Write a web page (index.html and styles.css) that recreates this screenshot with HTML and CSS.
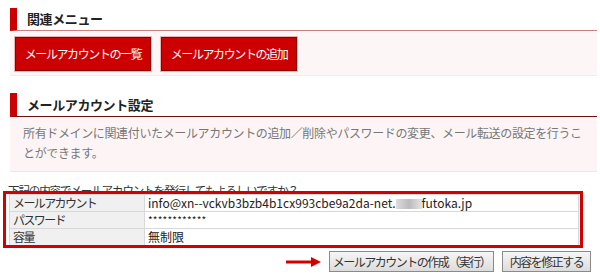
FILE: index.html
```html
<!DOCTYPE html>
<html lang="ja">
<head>
    <meta charset="UTF-8">
    <title>メールアカウント設定</title>
    <link rel="stylesheet" href="styles.css">
</head>
<body>
    <div class="page">
        <h2 class="sec-title sec-title-light">関連メニュー</h2>
        <div class="menu-panel">
            <a class="red-btn" href="#">メールアカウントの一覧</a>
            <a class="red-btn" href="#">メールアカウントの追加</a>
        </div>

        <h2 class="sec-title sec-title-dark">メールアカウント設定</h2>
        <div class="desc-panel">
            <p>所有ドメインに関連付いたメールアカウントの追加／削除やパスワードの変更、メール転送の設定を行うことができます。</p>
        </div>

        <div class="confirm">
            <p class="confirm-text">下記の内容でメールアカウントを発行してもよろしいですか？</p>
            <table class="confirm-table">
                <tr><th>メールアカウント</th><td>info@xn--vckvb3bzb4b1cx993cbe9a2da-net.<span class="blur"></span>futoka.jp</td></tr>
                <tr><th>パスワード</th><td class="pw">************</td></tr>
                <tr><th>容量</th><td>無制限</td></tr>
            </table>
            <div class="mark"></div>
        </div>

        <div class="actions">
            <svg class="arrow" width="36" height="12" viewBox="0 0 36 12">
                <line x1="0" y1="6" x2="27" y2="6" stroke="#d40000" stroke-width="3"/>
                <polygon points="25,1 35,6 25,11" fill="#d40000"/>
            </svg>
            <button class="gray-btn btn-run">メールアカウントの作成（実行）</button>
            <button class="gray-btn btn-fix">内容を修正する</button>
        </div>
    </div>
</body>
</html>
```

FILE: styles.css
```css
body { margin: 0; background: #fff; color: #333; font-family: "Noto Sans CJK JP", "Noto Sans", sans-serif; }
.page { padding: 8px 3px 0 0; }

.sec-title { margin: 0 0 0 10px; height: 22px; line-height: 22px; padding-left: 10px; border-left: 7px solid #cc0000; font-size: 13px; font-weight: bold; letter-spacing: -0.4px; color: #222; }
.sec-title-light { border-bottom: 1px solid #c98080; }
.sec-title-dark { margin-top: 17px; height: 23px; line-height: 23px; border-bottom: 1px solid #6a1010; }

.menu-panel { margin-left: 10px; background: #fdf6f6; border-bottom: 1px solid #eee; padding: 6px 5px 4px; display: flex; gap: 10px; }
.red-btn { display: block; width: 134px; height: 32px; line-height: 32px; text-align: center; background: #cc0000; border: 1px solid #8c0000; box-shadow: 0 0 0 1px #eab4b4; color: #fff; text-decoration: none; font-size: 12px; letter-spacing: -1.4px; }

.desc-panel { margin-left: 10px; background: #fdf5f5; border-bottom: 1px solid #e8e8e8; padding: 6px 13px 8px; }
.desc-panel p { margin: 0; font-size: 12px; line-height: 20px; letter-spacing: -0.36px; color: #777; }

.confirm { position: relative; margin: 10px 0 0 8px; }
.confirm-text { margin: 0; font-size: 11.5px; line-height: 16px; letter-spacing: -1.1px; color: #333; }
.confirm-table { position: relative; border-collapse: collapse; width: 570px; margin: -4px 0 0 1px; font-size: 12px; }
.confirm-table th, .confirm-table td { border: 1px solid #d8d8d8; height: 16px; padding: 0 3px; line-height: 16px; text-align: left; font-weight: normal; }
.confirm-table th { width: 128px; background: #f0f0f0; letter-spacing: -1.6px; color: #333; }
.confirm-table td { background: #fff; color: #222; }
.confirm-table td.pw { font-size: 10px; letter-spacing: 0.2px; }
.blur { display: inline-block; width: 26px; height: 10px; background: linear-gradient(90deg, #ddd, #bbb 50%, #e4e4e4); vertical-align: -1px; }
.mark { position: absolute; left: -5px; top: 9px; width: 574px; height: 51px; border: 3px solid #d40000; }

.actions { display: flex; justify-content: flex-end; align-items: center; gap: 8px; margin-top: 5px; padding-right: 6px; }
.arrow { margin-right: -1px; }
.gray-btn { height: 21px; padding: 0; border: 1px solid #8a8a8a; background: linear-gradient(#f6f6f6, #dcdcdc); color: #333; font-family: inherit; font-size: 12px; letter-spacing: -1.5px; }
.btn-run { width: 165px; }
.btn-fix { width: 89px; }
```
